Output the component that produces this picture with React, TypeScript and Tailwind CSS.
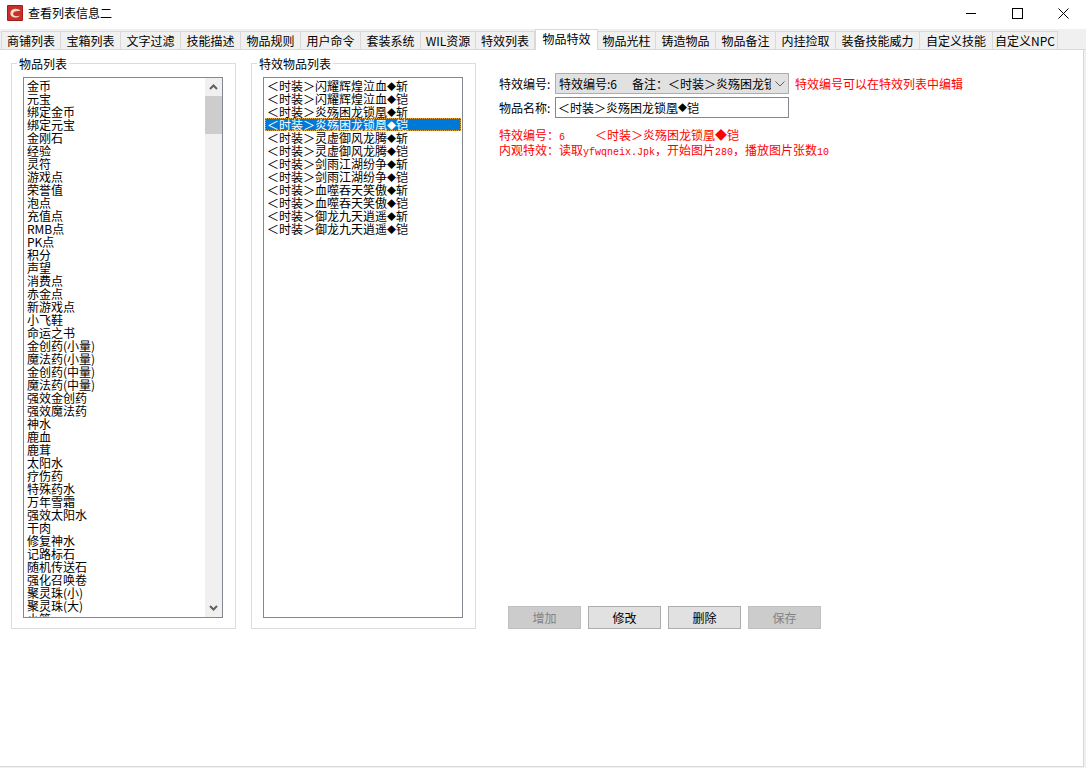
import type { ReactNode } from "react";

const FONT = "font-['Noto_Sans_CJK_SC','Liberation_Sans',sans-serif]";

const tabs: [string, number][] = [
  ["商铺列表", 60], ["宝箱列表", 60], ["文字过滤", 60], ["技能描述", 60], ["物品规则", 60], ["用户命令", 60],
  ["套装系统", 60], ["WIL资源", 55], ["特效列表", 59], ["物品特效", 63], ["物品光柱", 58], ["铸造物品", 60],
  ["物品备注", 60], ["内挂捡取", 60], ["装备技能威力", 84], ["自定义技能", 73], ["自定义NPC", 65],
];

const items = ["金币","元宝","绑定金币","绑定元宝","金刚石","经验","灵符","游戏点","荣誉值","泡点","充值点","RMB点","PK点","积分","声望","消费点","赤金点","新游戏点","小飞鞋","命运之书","金创药(小量)","魔法药(小量)","金创药(中量)","魔法药(中量)","强效金创药","强效魔法药","神水","鹿血","鹿茸","太阳水","疗伤药","特殊药水","万年雪霜","强效太阳水","干肉","修复神水","记路标石","随机传送石","强化召唤卷","聚灵珠(小)","聚灵珠(大)","小笼"];

const effects = ["闪耀辉煌泣血","炎殇困龙锁凰","灵虚御风龙腾","剑雨江湖纷争","血噬吞天笑傲","御龙九天逍遥"];

function Logo() {
  return (
    <svg width="16" height="16" viewBox="0 0 16 16">
      <rect width="16" height="16" rx="1" fill="#a81c18" />
      <rect x="1" y="1" width="14" height="14" fill="#c5302a" />
      <path d="M13.5 6 C11 3 6 3 4 6 C2.5 9 4 12 7.5 12.5 C10 12.8 12 12 13 10.5 C11 11.5 8 11.5 6.5 10 C5.5 8.5 6.5 6.5 9 6.2 C10.5 6 12 6 13.5 6Z" fill="#f4dccb" />
    </svg>
  );
}

function Diamond() {
  return <span className="inline-block w-[9px] text-[9px] text-center align-[1px]">◆</span>;
}

function Mono({ children }: { children: ReactNode }) {
  return <span className="font-['Liberation_Mono',monospace] text-[10px]">{children}</span>;
}

function GroupBox({ title, children }: { title: string; children: ReactNode }) {
  return (
    <fieldset className="w-[225px] h-[572px] border border-[#dcdcdc] pl-[11px] pr-[12px] min-w-0">
      <legend className="-ml-[6px] px-[2px] text-[12px] leading-[13px] h-[13px]">{title}</legend>
      <div className="mt-[7px] h-[541px] border border-[#828790] bg-white flex overflow-hidden">{children}</div>
    </fieldset>
  );
}

function Chevron({ up }: { up?: boolean }) {
  return (
    <svg width="9" height="6" viewBox="0 0 9 6">
      <path d={up ? "M1 5 L4.5 1.5 L8 5" : "M1 1 L4.5 4.5 L8 1"} fill="none" stroke="#606060" strokeWidth="2" />
    </svg>
  );
}

function WinButton({ children }: { children: ReactNode }) {
  return <div className="w-[46px] h-[26px] flex items-center justify-center">{children}</div>;
}

export default function App() {
  return (
    <div className={`${FONT} w-[1086px] h-[768px] bg-white text-black text-[12px] flex flex-col overflow-hidden`}>
      <div className="h-[29px] pb-[3px] flex items-center shrink-0">
        <div className="ml-[7px] mr-[5px] flex"><Logo /></div>
        <span className="text-[12px]">查看列表信息二</span>
        <div className="ml-auto flex items-center">
          <WinButton><svg width="11" height="11" viewBox="0 0 11 11"><path d="M0 5.5H10" stroke="#000" /></svg></WinButton>
          <WinButton><svg width="11" height="11" viewBox="0 0 11 11"><rect x="0.5" y="0.5" width="10" height="10" fill="none" stroke="#000" /></svg></WinButton>
          <WinButton><svg width="11" height="11" viewBox="0 0 11 11"><path d="M0.5 0.5L10.5 10.5M10.5 0.5L0.5 10.5" stroke="#000" /></svg></WinButton>
        </div>
      </div>

      <div className="h-[21px] shrink-0 bg-[#f0f0f0] flex items-end pl-[1px] border-b border-[#d9d9d9]">
        {tabs.map(([t, w]) =>
          t === "物品特效" ? (
            <div key={t} style={{ width: w }} className="h-[21px] -mb-[1px] pb-[2px] bg-white border border-b-0 border-[#d9d9d9] flex items-center justify-center">{t}</div>
          ) : (
            <div key={t} style={{ width: w }} className="h-[18px] border-r border-t border-[#d9d9d9] first:border-l flex items-center justify-center">{t}</div>
          )
        )}
      </div>

      <div className="flex-1 bg-[#f0f0f0] pr-[2px] pb-[1px] flex min-h-0">
        <div className="flex-1 bg-white border-r border-b border-[#d9d9d9] flex items-start pl-[11px] pt-[7px] gap-[15px]">
          <GroupBox title="物品列表">
            <div className="flex-1 overflow-hidden px-[3px] pt-[2px] leading-[12px]">
              {items.map((s, i) => <div key={i} className="h-[13px] whitespace-nowrap">{s}</div>)}
            </div>
            <div className="w-[17px] bg-[#f0f0f0] flex flex-col shrink-0">
              <div className="h-[18px] flex items-center justify-center"><Chevron up /></div>
              <div className="h-[38px] bg-[#cdcdcd]" />
              <div className="flex-1" />
              <div className="h-[18px] flex items-center justify-center"><Chevron /></div>
            </div>
          </GroupBox>

          <GroupBox title="特效物品列表">
            <div className="flex-1 overflow-hidden px-[1px] pt-[1px] leading-[13px]">
              {effects.flatMap((e) => ["斩", "铠"].map((k) => ({ e, k }))).map(({ e, k }, i) => (
                <div key={i} className={`h-[13px] pl-[2px] whitespace-nowrap ${i === 3 ? "bg-[#0078d7] text-white outline-1 -outline-offset-1 outline-dotted outline-[#e8a33d]" : ""}`}>
                  ＜时装＞{e}<Diamond />{k}
                </div>
              ))}
            </div>
          </GroupBox>

          <div className="w-[322px] h-[572px] ml-[8px] flex flex-col pt-[16px]">
            <div className="flex items-center h-[21px]">
              <span className="w-[56px] shrink-0">特效编号:</span>
              <div className="w-[234px] h-[21px] shrink-0 bg-[#e1e1e1] border border-[#adadad] flex items-center pl-[3px] overflow-hidden">
                <span className="whitespace-pre overflow-hidden flex-1">
                  特效编号:6<span className="ml-[15px]">备注：</span><span>＜时装＞炎殇困龙锁凰◆铠</span>
                </span>
                <span className="w-[17px] flex justify-center shrink-0">
                  <svg width="10" height="6" viewBox="0 0 10 6"><path d="M0.5 0.5L5 5L9.5 0.5" fill="none" stroke="#606060" /></svg>
                </span>
              </div>
              <span className="ml-[6px] text-[#ff0000] whitespace-nowrap">特效编号可以在特效列表中编辑</span>
            </div>
            <div className="flex items-center h-[21px] mt-[3px]">
              <span className="w-[56px] shrink-0">物品名称:</span>
              <div className="w-[234px] h-[21px] border border-[#828790] flex items-center pl-[2px] whitespace-nowrap">＜时装＞炎殇困龙锁凰<Diamond />铠</div>
            </div>
            <div className="mt-[11px] text-[#ff0000] leading-[12px] whitespace-pre">
              <div>特效编号：<Mono>6     </Mono>＜时装＞炎殇困龙锁凰◆铠</div>
              <div>内观特效：读取<Mono>yfwqneix.Jpk</Mono>，开始图片<Mono>280</Mono>，播放图片张数<Mono>10</Mono></div>
            </div>
            <div className="mt-auto flex gap-[7px] pl-[9px]">
              {["增加","修改","删除","保存"].map((b) => {
                const off = b === "增加" || b === "保存";
                return (
                  <button key={b} className={`w-[73px] h-[23px] border flex items-center justify-center ${off ? "bg-[#cccccc] border-[#bfbfbf] text-[#838383]" : "bg-[#e1e1e1] border-[#adadad]"}`}>{b}</button>
                );
              })}
            </div>
          </div>
        </div>
      </div>
    </div>
  );
}
